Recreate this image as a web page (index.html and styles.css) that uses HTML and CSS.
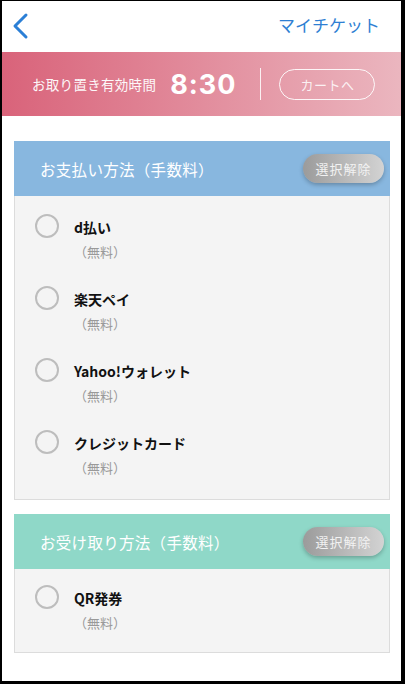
FILE: index.html
```html
<!DOCTYPE html>
<html lang="ja">
<head>
  <meta charset="UTF-8">
  <meta name="viewport" content="width=device-width, initial-scale=1.0">
  <title>マイチケット</title>
  <link rel="stylesheet" href="styles.css">
</head>
<body>
<div class="screen">
  <div class="header">
    <svg class="back" width="18" height="28" viewBox="0 0 18 28">
      <polyline points="14,3 3,14 14,25" fill="none" stroke="#2b7fd6" stroke-width="3" stroke-linecap="round" stroke-linejoin="round"/>
    </svg>
    <a class="my-ticket" href="#">マイチケット</a>
  </div>
  <div class="timer">
    <span class="timer-label">お取り置き有効時間</span>
    <span class="timer-value">8:30</span>
    <span class="divider"></span>
    <a class="cart-btn" href="#">カートへ</a>
  </div>

  <div class="card">
    <div class="card-head pay">
      <span class="card-title">お支払い方法（手数料）</span>
      <button class="clear-btn">選択解除</button>
    </div>
    <div class="card-body">
      <div class="option">
        <span class="radio"></span>
        <div>
          <div class="opt-name">d払い</div>
          <div class="opt-fee">（無料）</div>
        </div>
      </div>
      <div class="option">
        <span class="radio"></span>
        <div>
          <div class="opt-name">楽天ペイ</div>
          <div class="opt-fee">（無料）</div>
        </div>
      </div>
      <div class="option">
        <span class="radio"></span>
        <div>
          <div class="opt-name">Yahoo!ウォレット</div>
          <div class="opt-fee">（無料）</div>
        </div>
      </div>
      <div class="option">
        <span class="radio"></span>
        <div>
          <div class="opt-name">クレジットカード</div>
          <div class="opt-fee">（無料）</div>
        </div>
      </div>
    </div>
  </div>

  <div class="card">
    <div class="card-head receive">
      <span class="card-title">お受け取り方法（手数料）</span>
      <button class="clear-btn">選択解除</button>
    </div>
    <div class="card-body">
      <div class="option">
        <span class="radio"></span>
        <div>
          <div class="opt-name">QR発券</div>
          <div class="opt-fee">（無料）</div>
        </div>
      </div>
    </div>
  </div>
</div>
</body>
</html>
```

FILE: styles.css
```css
body {
  margin: 0;
  padding: 0;
  background-color: #000;
  font-family: "Noto Sans CJK JP", "Noto Sans", sans-serif;
}
.screen {
  margin: 1px 0 0 2px;
  width: 399px;
  height: 680px;
  background-color: #fff;
  overflow: hidden;
}
.header {
  height: 51px;
  display: flex;
  align-items: center;
  justify-content: space-between;
  padding: 0 21px 0 10px;
}
.back {
  display: block;
  margin-top: -2px;
}
.my-ticket {
  color: #2f7fd3;
  font-size: 17px;
  text-decoration: none;
  margin-top: -4px;
}
.timer {
  height: 64px;
  display: flex;
  align-items: center;
  padding-left: 30px;
  background: linear-gradient(to right, #d9637a, #ebb6bf);
  color: #fff;
}
.timer-label {
  font-size: 13.5px;
  letter-spacing: 0.3px;
  opacity: 0.95;
}
.timer-value {
  font-family: "Inter", "Liberation Sans", sans-serif;
  font-weight: 700;
  font-size: 27px;
  margin-left: 14px;
  letter-spacing: 1px;
}
.divider {
  width: 1px;
  height: 32px;
  background-color: rgba(255, 255, 255, 0.85);
  margin-left: 24px;
}
.cart-btn {
  margin-left: 18px;
  width: 94px;
  height: 29px;
  border: 1px solid rgba(255, 255, 255, 0.9);
  border-radius: 16px;
  display: flex;
  align-items: center;
  justify-content: center;
  color: rgba(255, 255, 255, 0.85);
  font-size: 13px;
  letter-spacing: 0.5px;
  text-decoration: none;
}
.card {
  margin: 25px 11px 0 12px;
}
.card + .card {
  margin-top: 14px;
}
.card-head {
  height: 55px;
  display: flex;
  align-items: center;
  justify-content: space-between;
  padding: 0 6px 0 26px;
}
.card-head.pay {
  background-color: #88b7df;
}
.card-head.receive {
  background-color: #8fd8c8;
}
.card-title {
  color: #fff;
  font-size: 15.5px;
  letter-spacing: 0.3px;
}
.clear-btn {
  width: 81px;
  height: 29px;
  border: none;
  border-radius: 15px;
  background: linear-gradient(to right, #9b9b9b, #d3d3d3);
  box-shadow: 0 2px 4px rgba(0, 0, 0, 0.25);
  color: #f2f2f2;
  font-family: "Noto Sans CJK JP", sans-serif;
  font-size: 13px;
  letter-spacing: 1px;
  padding: 0;
}
.card-body {
  background-color: #f4f4f4;
  border: 1px solid #dcdcdc;
  border-top: none;
  padding: 18px 0 21px 20px;
}
.card + .card .card-body {
  padding: 16px 0 19px 20px;
}
.option {
  display: flex;
  align-items: flex-start;
  padding-top: 3px;
}
.option + .option {
  margin-top: 24px;
}
.radio {
  width: 20px;
  height: 20px;
  border: 2px solid #bdbdbd;
  border-radius: 50%;
  margin-top: -3px;
  margin-right: 15px;
  flex-shrink: 0;
}
.opt-name {
  font-size: 14px;
  font-weight: 700;
  color: #111;
  line-height: 20px;
}
.opt-fee {
  font-size: 13px;
  color: #999;
  line-height: 20px;
  margin-top: 5px;
}
```
